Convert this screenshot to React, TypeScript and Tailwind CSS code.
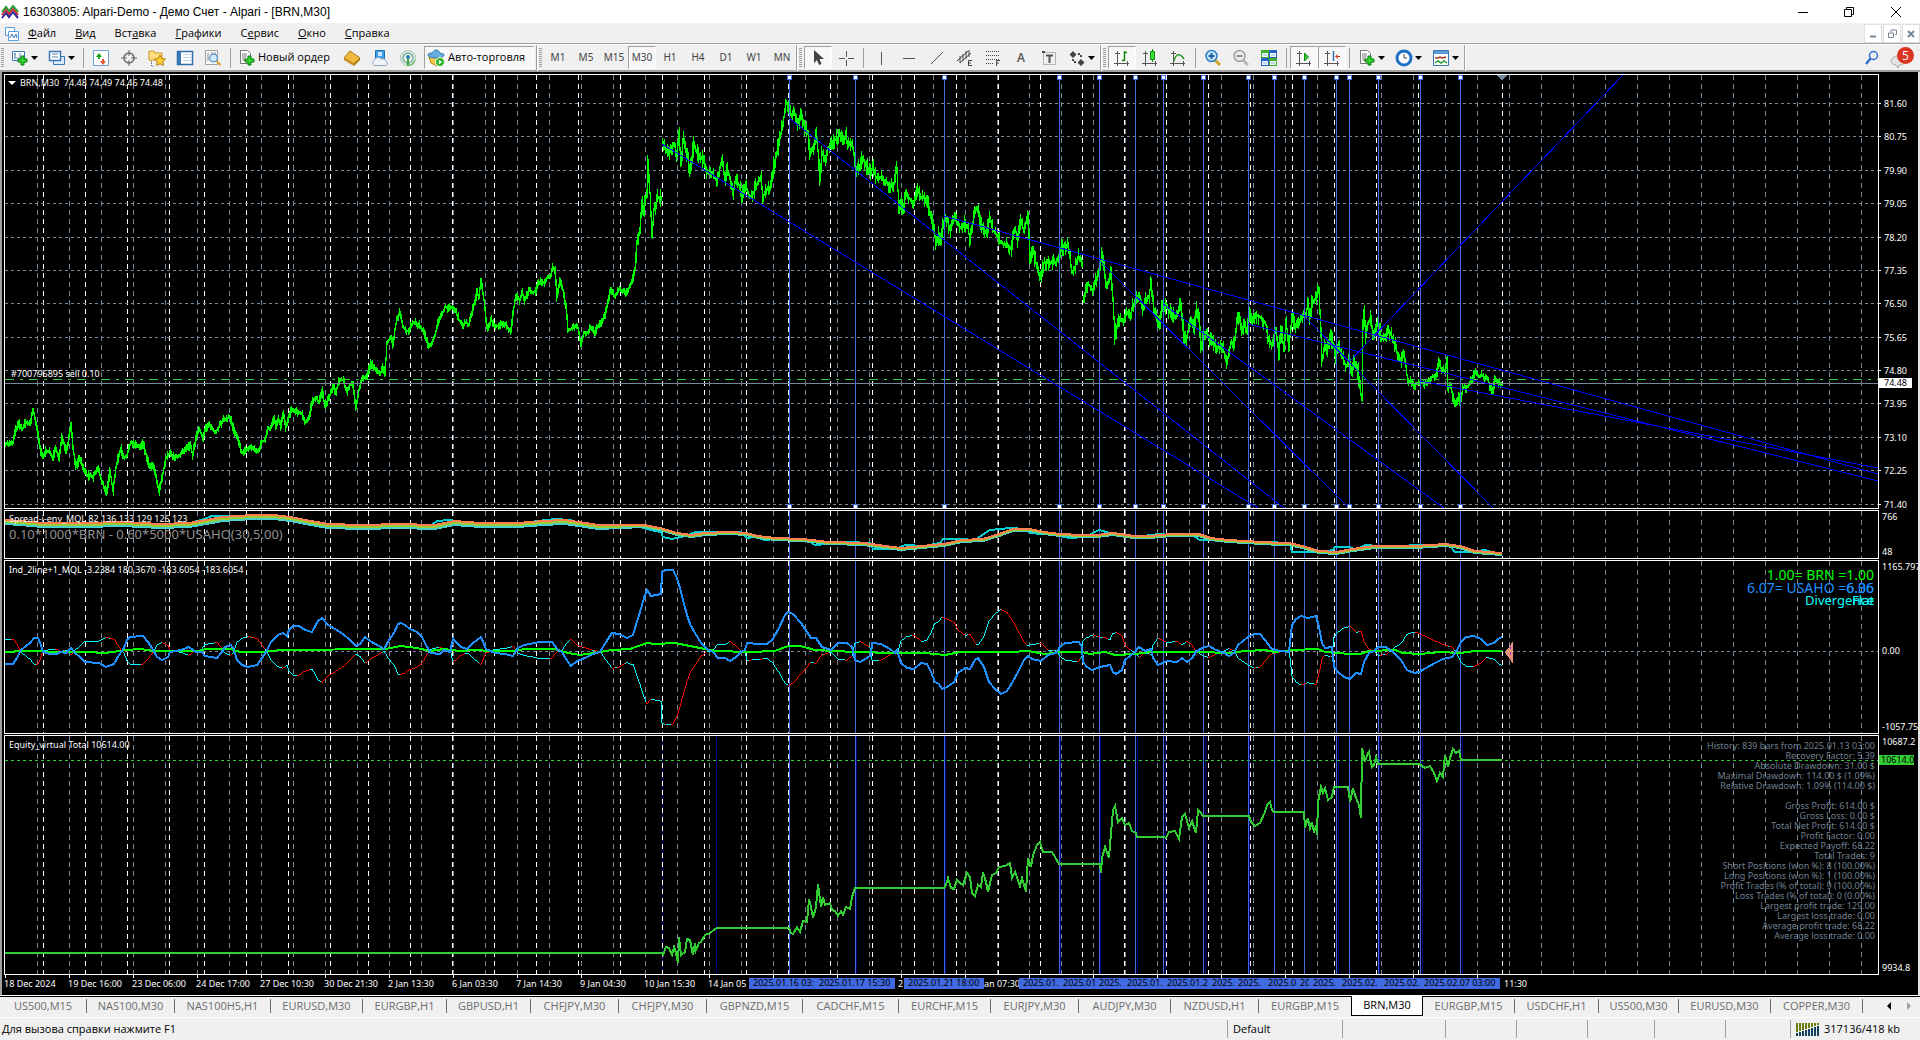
import React from 'react';

type Pt = [number, number];

const SMALL = "font-['Noto_Sans',sans-serif] text-[9px] leading-[10px]";

/* ---------- chart data ---------- */

const parse = (s: string): Pt[] => s.trim().split(/\s+/).map((p) => p.split(',').map(Number) as Pt);

const PRICE = [
  `5,443 8,444 12,443 14,432 18,423 21,430 25,422 29,425 32,410 34,418 37,435 40,453 42,458 45,450 48,452 52,457 55,448 58,460
  61,437 65,450 67,443 70,423 72,447 75,467 79,458 82,468 86,475 92,477 97,468 99,475 103,487 106,493 109,470 112,491 115,467
  120,448 123,458 126,455 130,442 135,445 139,447 142,443 146,458 149,468 152,465 155,477 158,492 162,473 165,458 169,453
  173,458 179,455 185,450 189,445 192,455 194,443 198,428 202,438 205,427 209,425 214,433 219,425 223,420 229,417 233,430
  237,440 241,453 244,450 250,447 257,452 261,442 264,440 267,427 269,430 273,418 275,427 278,420 280,427 282,413 285,427
  290,410 295,412 301,413 304,423 308,417 311,403 315,397 318,403 321,390 324,407 328,398 332,387 335,392 338,380 342,380
  346,392 349,385 352,385 355,408 358,390 361,378 365,377 367,373 370,362 373,368 379,374 382,368 384,373 386,343 390,337
  392,345 394,330 396,318 399,312 402,327 405,330 408,332 412,322 418,325 423,332 427,345 430,345 434,335 437,322 441,315
  444,307 447,308 451,307 455,312 458,320 462,325 465,322 468,325 471,313 474,300 476,292 478,298 480,280 483,300 485,320
  487,330 490,320 495,327 500,324 505,325 510,332 512,313 515,295 519,300 521,293 524,300 528,290 531,292 535,292 537,282
  543,282 547,277 549,278 552,267 554,270 556,297 559,282 562,290 565,307 567,330 572,328 575,325 577,328 580,343 583,333
  587,333 590,327 593,333 598,325 603,317 606,307 609,293 611,290 614,297 618,289 624,293 628,288 631,282 634,270 636,243
  639,230 641,203 643,210 646,190 647,160 649,193 651,237 653,210 657,197 661,198`,
  `662,142 664,148 668,155 671,147 673,143 676,155 678,133 680,165 682,140 684,145 687,158 689,172 693,143 696,153 700,157
  703,163 707,173 711,172 716,182 721,158 724,180 726,167 730,182 732,193 735,178 738,185 741,195 745,187 749,198 753,192
  757,182 760,177 762,198 765,190 769,188 771,177 774,160 776,153 778,142 780,133 783,117 785,102 788,108 791,117 793,112
  797,123 800,115 803,125 807,133 809,153 812,150 815,133 817,150 819,178 821,153 824,160 827,148 830,145 834,140 839,135
  842,142 845,135 847,147 850,142 853,153 855,173 858,168 862,157 865,165 869,172 872,167 875,177 880,178 885,182 889,187
  893,183 896,168 898,213 900,200 902,210 905,193 908,198 913,203 916,188 920,198 923,198 927,205 930,215 933,228 935,245
  938,235 940,243 942,223 946,218 949,230 952,217 956,222 959,228 963,223 967,228 969,240 972,222 973,212 976,208 980,222
  983,233 986,233 989,217 992,230 996,235 1000,243 1005,245 1010,249 1014,228 1017,240 1020,220 1023,232 1027,213 1029,263
  1032,247 1034,260 1038,273 1040,276 1043,263 1050,263 1055,262 1058,255 1061,247 1065,247 1067,243 1071,273 1073,270
  1077,257 1082,264`,
  `1083,300 1087,283 1092,291 1096,277 1099,268 1101,252 1104,277 1106,288 1110,270 1112,300 1114,337 1118,317 1122,322
  1126,312 1129,317 1132,305 1135,303 1138,293 1142,307 1145,300 1148,297 1150,283 1153,310 1156,320 1159,325 1161,303
  1166,307 1171,315 1176,316 1180,303 1183,335 1186,337 1190,318 1193,330 1196,310 1198,318 1200,348 1203,333 1207,335
  1211,343 1216,348 1221,345 1226,363 1230,342 1233,348 1236,323 1238,313 1241,333 1243,322 1246,333 1248,310 1251,323
  1254,315 1260,317 1265,325 1267,337 1271,345 1275,328 1278,357 1280,327 1283,350 1285,320 1288,347 1291,315 1294,328
  1298,323 1302,317 1305,315 1307,303 1309,317 1311,303 1314,300 1316,297 1318,288 1320,333 1321,360 1324,347 1326,352
  1329,335 1332,343 1335,355 1338,348 1342,358 1345,367 1348,360 1351,375 1353,363 1357,370 1359,388 1361,400 1362,325
  1363,310 1365,337 1367,323 1370,317 1372,338 1375,332 1377,320 1380,337 1384,338 1387,328 1390,335 1394,345 1397,357
  1400,362 1402,352 1405,367 1407,383 1411,380 1413,385 1420,382 1425,383 1430,378 1435,375 1438,363 1441,370 1444,372
  1446,360 1447,390 1449,383 1452,397 1454,403 1457,398 1460,401 1462,387 1467,387 1471,378 1475,372 1478,377 1481,375
  1484,378 1487,380 1491,393 1494,380 1498,383 1502,385`,
].map(parse);

const OSC = parse(`5,664 13,664 17,658 21,650 26,646 30,643 34,638 38,638 41,645 43,652 50,654 57,654 60,652 66,653 71,648 75,653
  80,657 85,662 99,663 106,667 114,664 119,655 124,648 127,640 130,637 143,636 148,642 152,648 157,657 162,660 168,657 170,652
  181,650 189,647 196,652 202,652 205,656 217,658 221,653 225,647 231,645 234,650 237,660 242,665 248,667 257,665 262,658
  266,652 271,642 278,635 283,633 287,636 289,630 293,626 299,626 305,630 312,632 318,621 322,618 328,625 335,629 343,634
  350,640 356,646 360,644 365,637 370,641 379,646 384,649 389,640 394,633 398,624 401,623 405,625 410,629 417,632 422,637
  427,647 431,653 440,654 444,650 450,652 453,639 461,647 467,649 473,643 481,637 486,649 495,653 505,654 513,656 518,648
  524,645 535,643 539,642 552,642 558,650 562,652 566,659 571,666 577,661 585,658 593,654 600,652 606,642 612,633 619,634
  627,638 633,635 636,625 640,612 644,598 647,590 651,596 661,594 662,572 665,570 673,570 677,578 680,588 683,600 687,615
  690,624 695,633 701,643 707,649 713,652 718,658 725,658 730,661 736,657 741,652 745,650 747,643 758,644 767,644 773,639
  779,628 785,615 788,612 793,614 801,623 807,632 811,638 816,638 822,647 831,650 838,643 847,643 852,647 855,660 860,662
  867,658 871,655 872,643 881,644 890,649 895,653 897,650 901,663 907,668 914,669 921,663 927,664 931,672 935,682 939,684
  942,689 947,687 954,682 958,673 965,668 970,669 975,660 978,658 984,667 989,682 995,689 1001,694 1007,691 1012,683
  1018,672 1024,660 1028,656 1032,659 1041,661 1048,655 1056,653 1060,647 1065,643 1079,642 1082,647 1083,662 1087,667
  1092,670 1100,667 1105,666 1110,665 1113,672 1116,674 1122,670 1125,660 1130,656 1135,652 1139,647 1145,651 1151,649
  1153,658 1158,665 1167,661 1177,662 1182,658 1187,662 1192,658 1196,652 1202,648 1209,646 1216,650 1224,653 1229,656
  1234,653 1238,645 1243,641 1248,637 1254,634 1260,634 1265,640 1271,648 1274,650 1289,652 1292,625 1296,619 1301,616
  1308,618 1316,616 1319,627 1322,643 1325,648 1332,647 1334,667 1338,672 1344,677 1350,679 1356,673 1361,674 1364,662
  1369,653 1374,651 1378,647 1386,647 1393,652 1401,660 1407,670 1414,673 1419,672 1426,668 1435,663 1443,659 1452,657
  1457,650 1461,642 1466,637 1474,636 1481,639 1487,645 1494,643 1498,639 1502,637`);

const BASE = parse(`5,652 13,652 16,651 38,651 48,652 85,652 106,653 119,651 127,650 140,649 155,651 198,651 206,649 230,649 240,652
  262,652 270,651 285,650 385,649 401,646 417,648 430,651 444,649 460,651 475,650 490,651 512,651 525,649 555,649 568,653
  580,655 600,652 612,650 630,649 647,643 655,644 675,643 700,648 715,651 750,652 775,651 788,646 800,646 815,650 855,652
  895,653 925,653 945,655 960,652 975,652 1010,652 1028,651 1045,654 1060,652 1082,652 1090,654 1105,652 1115,655
  1135,654 1150,652 1200,652 1230,653 1245,651 1265,650 1275,652 1293,650 1318,649 1325,652 1350,654 1360,654 1369,651
  1395,650 1403,653 1420,654 1440,652 1460,653 1475,651 1502,651`);

const SPREAD = parse(`5,520 21,521 42,523 84,523 122,522 160,524 189,523 206,520 223,517 253,515 274,515 290,517 311,521 328,524
  362,525 400,524 434,525 455,521 480,523 518,523 543,521 564,520 579,522 598,525 644,525 660,528 677,533 691,535 705,533
  730,532 746,533 758,536 775,538 803,539 828,542 864,543 885,546 901,548 922,546 944,544 962,540 983,539 999,534 1013,529
  1030,529 1044,532 1060,534 1081,535 1097,535 1113,533 1134,536 1150,536 1171,534 1199,534 1211,538 1228,540 1280,543
  1289,543 1302,546 1319,551 1336,552 1353,549 1374,546 1416,546 1445,544 1460,546 1475,551 1502,553`);

const SPREAD_RAW = parse(`5,523 30,522 60,524 100,524 150,525 190,523 204,519 212,516 225,516 245,516 270,518 290,521 320,526 340,528
  360,528 400,527 430,526 437,521 450,520 470,524 500,526 530,522 555,519 570,520 590,526 640,527 655,531 661,532 663,537
  672,539 685,536 695,532 705,532 740,532 747,538 755,537 765,540 785,538 810,542 815,545 850,542 870,543 873,549 895,549
  905,545 925,546 940,543 943,539 960,539 975,540 985,533 990,530 1010,528 1025,529 1030,533 1055,535 1070,538 1085,537
  1099,530 1110,533 1120,536 1135,538 1150,535 1160,534 1180,536 1190,534 1200,540 1240,541 1265,542 1290,543 1292,552
  1320,552 1333,550 1335,547 1350,547 1355,550 1365,545 1378,546 1440,545 1450,546 1455,552 1470,552 1485,550 1495,553
  1502,555`);

const EQUITY = `5,953 662,953 663,955 666,947 669,948 672,955 674,947 676,953 678,963 679,937 681,955 685,952 687,939 690,940
  693,955 695,943 696,950 699,943 701,942 705,935 710,933 715,929 717,928 789,928 791,933 793,934 797,927 800,932 803,921
  807,922 809,899 811,907 813,918 816,907 818,884 821,907 823,897 825,905 830,903 832,910 835,911 838,916 841,911 843,915
  846,907 850,909 852,897 855,888 944,888 946,885 948,878 951,888 954,889 957,880 960,883 963,885 967,873 970,877 972,893
  975,896 978,885 981,887 983,872 986,882 988,892 992,875 996,873 999,867 1005,866 1010,863 1012,878 1015,872 1020,886
  1022,878 1026,892 1028,858 1031,867 1033,855 1037,845 1040,842 1043,852 1052,852 1055,857 1059,864 1100,864 1101,873
  1102,858 1105,847 1109,858 1111,833 1113,810 1115,806 1118,822 1122,818 1125,825 1129,823 1132,831 1136,833 1137,837
  1164,837 1166,838 1169,832 1175,831 1179,839 1182,817 1185,814 1189,828 1192,821 1196,833 1198,810 1200,812 1203,816
  1249,816 1251,822 1255,826 1260,823 1265,812 1267,805 1270,802 1272,810 1274,812 1304,812 1305,828 1308,818 1310,828
  1312,822 1314,833 1316,825 1317,835 1318,802 1321,787 1323,793 1325,788 1328,800 1332,797 1334,787 1348,787 1350,802
  1353,788 1356,798 1359,805 1361,818 1362,748 1365,762 1367,755 1369,752 1372,767 1374,765 1376,757 1378,764 1419,764
  1422,766 1425,768 1430,766 1434,773 1437,781 1440,773 1443,777 1445,755 1448,767 1450,758 1453,749 1456,753 1459,751
  1461,760 1502,760`;

const TREND_LINES = [
  [662, 144, 1258, 508], [789, 118, 1284, 508], [944, 216, 1878, 474], [1099, 260, 1349, 508], [1163, 304, 1444, 508],
  [1248, 324, 1878, 481], [1304, 316, 1493, 508], [1349, 362, 1623, 75], [1420, 381, 1878, 468],
];

const GRID_X = Array.from({ length: 58 }, (_, i) => 37 + 32 * i);
const GRID_Y = [103, 136, 170, 203, 237, 270, 303, 337, 370, 403, 437, 470, 504];
const DAYS = [43, 85, 127, 169, 204, 246, 288, 330, ...Array.from({ length: 28 }, (_, i) => 368 + 42 * i)];
const MARKS = [789, 855, 944, 1059, 1099, 1135, 1163, 1203, 1248, 1274, 1304, 1336, 1349, 1378, 1420, 1460];
const TRADES = [662, 716, 856, 945, 1060, 1100, 1137, 1165, 1205, 1249, 1338, 1379, 1422, 1462];

/* ---------- helpers ---------- */

const sample = (pts: Pt[]): Pt[] => {
  const out: Pt[] = [];
  let k = 0;
  for (let x = pts[0][0]; x <= pts[pts.length - 1][0]; x++) {
    while (k < pts.length - 2 && x > pts[k + 1][0]) k++;
    const [x0, y0] = pts[k];
    const [x1, y1] = pts[k + 1];
    out.push([x, y0 + ((y1 - y0) * (x - x0)) / (x1 - x0)]);
  }
  return out;
};

const line = (pts: Pt[], dy = 0) => pts.map(([x, y]) => `${x},${Math.round(y + dy)}`).join(' ');

// the averages fan out on the calm first part of the history
const band = (n: number) => SPREAD.map(([x, y]) => `${x},${x < 640 ? y + 2 * n : y + n}`).join(' ');

const priceBars = () => {
  let seed = 7;
  const rnd = () => (seed = (seed * 16807) % 2147483647) / 2147483647;
  let d = '';
  PRICE.forEach((part) => {
    let prev = part[0][1];
    sample(part).forEach(([x, y]) => {
      const amp = x < 636 ? 4 : x < 1400 ? 8 : 5;
      const hi = Math.min(y, prev) - 1 - Math.pow(rnd(), 2) * amp;
      const lo = Math.max(y, prev) + 1 + Math.pow(rnd(), 2) * amp;
      d += `M${x + 0.5} ${Math.round(hi)}V${Math.round(lo)}`;
      prev = y;
    });
  });
  return d;
};

// mirror of the blue line; cyan while it moves away from zero, red on the way back
const mirrorPaths = () => {
  const a = sample(OSC);
  const b = sample(BASE);
  const v = a.map(([x, y], i): Pt => [x, Math.round(651 + (b[i][1] - 651) - (y - 651))]);
  let cyan = '';
  let red = '';
  for (let i = 1; i < v.length; i++) {
    const look = Math.min(v.length - 1, i + 2);
    const seg = `M${v[i - 1][0]} ${v[i - 1][1]}L${v[i][0]} ${v[i][1]}`;
    if (Math.abs(v[look][1] - 651) >= Math.abs(v[i - 1][1] - 651)) cyan += seg;
    else red += seg;
  }
  return { cyan, red };
};

const BARS = priceBars();
const MIRROR = mirrorPaths();

/* ---------- chart ---------- */

const Grid = ({ top, bottom }: { top: number; bottom: number }) => (
  <g strokeWidth="1">
    {GRID_X.map((x) => (
      <path key={x} d={`M${x + 0.5} ${top}V${bottom}`} stroke="#778899" strokeDasharray="5 4" />
    ))}
    {DAYS.map((x) => (
      <path key={x} d={`M${x + 0.5} ${top}V${bottom}`} stroke="#fff" strokeDasharray="5 4" />
    ))}
  </g>
);

const Marks = ({ top, bottom }: { top: number; bottom: number }) => (
  <path d={MARKS.map((x) => `M${x + 0.5} ${top}V${bottom}`).join('')} stroke="#4169e1" />
);

interface PanelProps {
  top: number;
  height: number;
  axis: React.ReactNode;
  overlay?: React.ReactNode;
  children: React.ReactNode;
}

const Panel: React.FC<PanelProps> = ({ top, height, axis, overlay, children }) => (
  <div className="flex min-h-0">
    <div className="relative min-w-0 flex-1 overflow-hidden border border-white">
      <svg
        className="block h-full w-full"
        viewBox={`5 ${top + 1} 1873 ${height - 2}`}
        preserveAspectRatio="none"
        shapeRendering="crispEdges"
        fill="none"
      >
        {children}
      </svg>
      {overlay}
    </div>
    <div className={`relative w-[39px] shrink-0 whitespace-nowrap text-white ${SMALL}`}>{axis}</div>
  </div>
);

const PRICES = ['81.60', '80.75', '79.90', '79.05', '78.20', '77.35', '76.50', '75.65', '74.80', '73.95', '73.10', '72.25', '71.40'];

const PriceAxis = () => (
  <>
    {PRICES.map((p, i) => (
      <div
        key={p}
        className="absolute left-0 flex -translate-y-1/2 items-center gap-[3px]"
        style={{ top: `${((GRID_Y[i] - 73.5) / 435) * 100}%` }}
      >
        <i className="h-px w-[2px] bg-white" />
        {p}
      </div>
    ))}
    <div
      className="absolute left-0 -translate-y-1/2 bg-white px-[5px] text-black"
      style={{ top: `${((383 - 73.5) / 435) * 100}%` }}
    >
      74.48
    </div>
  </>
);

const STATS = [
  'History: 839 bars from 2025.01.13 03:00',
  'Recovery Factor: 5.39',
  'Absolute Drawdown: 31.00 $',
  'Maximal Drawdown: 114.00 $ (1.09%)',
  'Relative Drawdown: 1.09% (114.00 $)',
  '',
  'Gross Profit: 614.00 $',
  'Gross Loss: 0.00 $',
  'Total Net Profit: 614.00 $',
  'Profit Factor: 0.00',
  'Expected Payoff: 68.22',
  'Total Trades: 9',
  'Short Positions (won %): 8 (100.00%)',
  'Long Positions (won %): 1 (100.00%)',
  'Profit Trades (% of total): 9 (100.00%)',
  'Loss Trades (% of total): 0 (0.00%)',
  'Largest profit trade: 129.00',
  'Largest loss trade: 0.00',
  'Average profit trade: 68.22',
  'Average loss trade: 0.00',
];

const TIMES: [number, string][] = [
  [4, '18 Dec 2024'], [68, '19 Dec 16:00'], [132, '23 Dec 06:00'], [196, '24 Dec 17:00'], [260, '27 Dec 10:30'],
  [324, '30 Dec 21:30'], [388, '2 Jan 13:30'], [452, '6 Jan 03:30'], [516, '7 Jan 14:30'], [580, '9 Jan 04:30'],
  [644, '10 Jan 15:30'], [708, '14 Jan 05'], [898, '2'], [984, 'an 07:30'], [1504, '11:30'],
];

const MARK_LABELS = [
  '2025.01.16 03:', '2025.01.17 15:30', '2025.01.21 18:00', '2025.01.', '2025.01', '2025.', '2025.01.', '2025.01.2',
  '2025.', '2025.', '2025.0', '20', '2025.', '2025.02.', '2025.02.', '2025.02.07 03:00',
];

const TimeAxis = () => (
  <div className={`relative h-[20px] overflow-hidden whitespace-nowrap text-white ${SMALL}`}>
    {Array.from({ length: 24 }, (_, i) => (
      <i key={i} className="absolute top-0 h-[3px] w-px bg-white" style={{ left: 3 + 64 * i }} />
    ))}
    {TIMES.map(([x, t]) => (
      <span key={x} className="absolute top-[4px]" style={{ left: x - 2 }}>
        {t}
      </span>
    ))}
    {MARKS.map((x, i) => (
      <span key={x} className="absolute top-[3px] h-[11px] w-[80px] bg-[#4169e1] pl-[4px] text-black" style={{ left: x - 42 }}>
        {MARK_LABELS[i]}
      </span>
    ))}
  </div>
);

const ChartWindow = () => (
  <main className="flex min-h-0 flex-1 flex-col border-r-2 border-l-2 border-r-[#e3e3e3] border-l-[#a0a0a0] bg-black pt-[2px]">
    <div className="grid min-h-0 flex-1 grid-rows-[435fr_49fr_174fr_240fr] gap-px pl-[2px]">
      <Panel
        top={74}
        height={435}
        axis={<PriceAxis />}
        overlay={
          <div className={`absolute inset-x-0 top-[3px] h-0 whitespace-pre text-white ${SMALL}`}>
            <div className="flex items-center gap-[4px] pl-[3px]">
              <svg width="8" height="4" viewBox="0 0 8 4">
                <path d="M0 0h8L4 4z" fill="#fff" />
              </svg>
              {'BRN,M30  74.48 74.49 74.46 74.48'}
            </div>
            <div className="absolute top-[291px] left-[6px]">#700796895 sell 0.10</div>
          </div>
        }
      >
        <Grid top={75} bottom={508} />
        {GRID_Y.map((y) => (
          <path key={y} d={`M5 ${y + 0.5}H1878`} stroke="#778899" strokeDasharray="3 3" />
        ))}
        <path d={BARS} stroke="#0f0" />
        <path d="M5 379.5H1878" stroke="#32cd32" strokeDasharray="9 6 3 6" />
        <path d="M5 383.5H1878" stroke="#778899" />
        <Marks top={75} bottom={508} />
        {TREND_LINES.map(([x1, y1, x2, y2]) => (
          <line key={x1} x1={x1} y1={y1} x2={x2} y2={y2} stroke="#00f" />
        ))}
        {MARKS.map((x) => (
          <path key={x} d={`M${x - 1.5} 75.5h4v4h-4zM${x - 1.5} 504.5h4v4h-4z`} fill="#fff" stroke="#4169e1" />
        ))}
        <path d="M1497 75h10l-5 6z" fill="#778899" />
      </Panel>

      <Panel
        top={510}
        height={49}
        axis={
          <div className="flex h-full flex-col justify-between pt-[2px] pb-[2px] pl-[3px]">
            <span>766</span>
            <span>48</span>
          </div>
        }
        overlay={
          <div className="absolute top-[3px] left-[4px] whitespace-nowrap">
            <div className={`text-white ${SMALL}`}>Spread-i-env_MQL 82 136 133 129 126 123</div>
            <div className="font-['Noto_Sans',sans-serif] text-[13px] leading-[20px] text-[#909090]">
              0.10*1000*BRN - 0.60*5000*USAHO(30,5.00)
            </div>
          </div>
        }
      >
        <Grid top={511} bottom={558} />
        <Marks top={511} bottom={558} />
        <polyline points={line(SPREAD_RAW)} stroke="#00ced1" strokeWidth="2" />
        <polyline points={band(2)} stroke="#48d1cc" strokeWidth="2" />
        <polyline points={band(1)} stroke="#9acd32" strokeWidth="2" />
        <polyline points={band(0)} stroke="#ff7f50" strokeWidth="2" />
      </Panel>

      <Panel
        top={560}
        height={174}
        axis={
          <div className="flex h-full flex-col justify-between pt-[2px] pb-[2px] pl-[3px]">
            <span>1165.797</span>
            <span className="absolute top-[86px]">0.00</span>
            <span>-1057.75</span>
          </div>
        }
        overlay={
          <>
            <div className={`absolute top-[4px] left-[4px] whitespace-nowrap text-white ${SMALL}`}>
              Ind_2line+1_MQL -3.2384 180.3670 -183.6054 -183.6054
            </div>
            <div className="absolute top-[7px] right-[4px] text-right font-['Noto_Sans',sans-serif] text-[14px] leading-[13px] whitespace-nowrap">
              <div className="text-[#0f0]">1.00= BRN =1.00</div>
              <div className="relative text-[#1e90ff]">
                6.07= USAHO =6.06
                <span className="absolute top-0 right-0">6.36</span>
              </div>
              <div className="relative text-[13px] leading-[12px] text-[#0ff]">
                Divergence
                <span className="absolute top-0 right-0">Flat</span>
              </div>
            </div>
          </>
        }
      >
        <Grid top={561} bottom={733} />
        <path d="M5 651.5H1878" stroke="#778899" strokeDasharray="3 3" />
        <Marks top={561} bottom={733} />
        <path d={MIRROR.cyan} stroke="#0ff" />
        <path d={MIRROR.red} stroke="#f00" />
        <polyline points={line(BASE)} stroke="#0f0" strokeWidth="2" />
        <polyline points={line(OSC)} stroke="#1e90ff" strokeWidth="2" />
        <path d="M1512.5 642v21L1505 652.5z" fill="#e9967a" />
        <path d="M1510.5 646v13" stroke="#9932cc" strokeDasharray="3 3" />
      </Panel>

      <Panel
        top={735}
        height={240}
        axis={
          <div className="flex h-full flex-col justify-between pt-[2px] pb-[2px] pl-[3px]">
            <span>10687.2</span>
            <span className="absolute top-[20px] left-0 bg-[#32cd32] pl-[2px] text-black">10614.0</span>
            <span>9934.8</span>
          </div>
        }
        overlay={
          <>
            <div className={`absolute top-[4px] left-[4px] text-white ${SMALL}`}>Equity_virtual Total 10614.00</div>
            <div className={`absolute top-[5px] right-[3px] text-right whitespace-nowrap text-[#708090] ${SMALL}`}>
              {STATS.map((s, i) => (
                <div key={i} className="h-[10px]">
                  {s}
                </div>
              ))}
            </div>
          </>
        }
      >
        <path d={TRADES.map((x) => `M${x + 0.5} 736V974`).join('')} stroke="#000080" />
        <Grid top={736} bottom={974} />
        <path d="M5 760.5H1878" stroke="#32cd32" strokeDasharray="3 3" />
        <Marks top={736} bottom={974} />
        <polyline points={EQUITY} stroke="#32cd32" strokeWidth="2" />
      </Panel>
    </div>
    <TimeAxis />
  </main>
);

/* ---------- toolbar ---------- */

const Svg = ({ children, w = 18 }: { children: React.ReactNode; w?: number }) => (
  <svg width={w} height="18" viewBox={`0 0 ${w} 18`} fill="none" className="shrink-0">
    {children}
  </svg>
);

const Plus = () => <path d="M10 7h3v3h3v3h-3v3h-3v-3H7v-3h3z" fill="#2fd32f" stroke="#0a7d0a" />;

const icons = {
  newChart: (
    <Svg>
      <path d="M1.5 2.5h12v9h-12z" fill="#fff" stroke="#3a78b5" />
      <path d="M4 4v5M3 5h2M3 9h8M9 4v4" stroke="#5b84ad" />
      <Plus />
    </Svg>
  ),
  profiles: (
    <Svg>
      <path d="M5.5 7.5h11v8h-11z" fill="#dcebfa" stroke="#3a78b5" />
      <path d="M1.5 2.5h11v9h-11z" fill="#fff" stroke="#3a78b5" strokeWidth="1.5" />
      <path d="M4 5h6M4 8h6" stroke="#5b84ad" />
    </Svg>
  ),
  market: (
    <Svg>
      <path d="M1.5 1.5h15v15h-15z" fill="#fff" stroke="#6aa3d8" />
      <path d="M4 8l3-4 3 4H8v2H6V8z" fill="#1ba01b" />
      <path d="M8 12l3 4 3-4h-2v-2h-2v2z" fill="#e2582c" />
    </Svg>
  ),
  data: (
    <Svg>
      <circle cx="9" cy="9" r="5" stroke="#666" strokeWidth="1.5" />
      <path d="M9 1v6M9 11v6M1 9h6M11 9h6" stroke="#666" />
    </Svg>
  ),
  navigator: (
    <Svg>
      <path d="M1 2h5l1 2h7v7H1z" fill="#ffdf80" stroke="#c9992a" />
      <path d="M3.5 12v5h3" stroke="#555" strokeDasharray="1 1" />
      <path d="M12 6l1.700 3.500 3.800.5-2.700 2.600.6 3.900-3.400-1.800-3.400 1.800.6-3.900L6.500 10l3.800-.5z" fill="#ffd02e" stroke="#b17d0c" />
    </Svg>
  ),
  terminal: (
    <Svg>
      <path d="M1.5 2.5h15v13h-15z" fill="#fff" stroke="#2f6fae" strokeWidth="1.5" />
      <path d="M2 3h3v12H2z" fill="#3a78b5" />
      <path d="M7 5.5h8M7 8.500h8M7 11.500h8" stroke="#c5d5e5" />
    </Svg>
  ),
  tester: (
    <Svg>
      <path d="M1.5 1.5h12v14h-12z" fill="#f8f8f8" stroke="#a0a0a0" />
      <path d="M4 4v8M8 3v7M11 3v5" stroke="#888" />
      <circle cx="9.500" cy="9" r="4" fill="#cfe6fb" stroke="#3a86c8" />
      <path d="M12.500 12l4 4" stroke="#d8a320" strokeWidth="2" />
    </Svg>
  ),
  order: (
    <Svg>
      <path d="M2.500 1.500h7l3 3v10h-10z" fill="#fff" stroke="#777" />
      <path d="M4 5h5M4 7h5M4 9h4M4 11h3" stroke="#777" />
      <Plus />
    </Svg>
  ),
  gold: (
    <Svg>
      <path d="M7 2l10 7-6 6L1 9z" fill="#f0bb3c" stroke="#a9770f" />
      <path d="M1 9l10 6v2L1 11z" fill="#c98d1b" />
      <path d="M11 15l6-6v2l-6 6z" fill="#a9770f" />
    </Svg>
  ),
  cloud: (
    <Svg>
      <path d="M4.500 1.500h9v8h-9z" fill="#3fa0ee" stroke="#1d6fb8" />
      <path d="M7 3h4v4H7z" fill="#cfe8ff" />
      <path d="M3.500 16.500a3 3 0 010-5.500 4 4 0 017-1 3 3 0 014 2 2.300 2.300 0 010 4.500z" fill="#eef4fa" stroke="#8aa5c0" />
    </Svg>
  ),
  signal: (
    <Svg>
      <circle cx="9" cy="9" r="7.500" fill="#e4efe9" stroke="#a7c3b4" />
      <circle cx="9" cy="9" r="5" stroke="#7bb0a0" strokeWidth="1.5" />
      <circle cx="9" cy="8" r="2" fill="#2c7fc4" />
      <path d="M9 9v8" stroke="#3da53d" strokeWidth="2" />
      <path d="M9 16.500a8 8 0 007-5" stroke="#6dbb6d" strokeWidth="1.5" />
    </Svg>
  ),
  expert: (
    <Svg>
      <path d="M2 8l2 6 6 3 5-4V8z" fill="#f2c94a" stroke="#b88a17" />
      <path d="M1 6c0-2 3-2 4-2s1-3 4-3 3 2 4 3 4 0 4 2-4 3-8 3-8-1-8-3z" fill="#64aee0" stroke="#2f77ad" />
      <circle cx="13" cy="13" r="4.500" fill="#27b527" stroke="#fff" />
      <path d="M11.800 10.800v4.400l3.400-2.200z" fill="#fff" />
    </Svg>
  ),
  cursor: (
    <Svg>
      <path d="M5 1v13l3-3 2 5 2.500-1-2-5H15z" fill="#444" />
    </Svg>
  ),
  cross: (
    <Svg>
      <path d="M9.500 2v6M9.500 11v6M2 9.500h6M11 9.500h6" stroke="#555" />
    </Svg>
  ),
  vline: (
    <Svg>
      <path d="M9.500 3v13" stroke="#555" />
    </Svg>
  ),
  hline: (
    <Svg>
      <path d="M3 9.500h12" stroke="#555" />
    </Svg>
  ),
  trend: (
    <Svg>
      <path d="M3 15L15 3" stroke="#555" />
    </Svg>
  ),
  channel: (
    <Svg>
      <path d="M1 12L12 2M4 14L15 4M4 7v7M7 5v7M10 2v8M13 1v7" stroke="#444" />
      <path d="M16 11.500h-3.500v5H16M12.500 14H15" stroke="#444" />
    </Svg>
  ),
  fibo: (
    <Svg>
      <path d="M2 2.500h14M2 6.500h14M2 10.500h14M2 14.500h8" stroke="#444" strokeDasharray="1 1" />
      <path d="M16 11.500h-3.500V17M12.500 14H15" stroke="#444" />
    </Svg>
  ),
  label: (
    <Svg>
      <path d="M3.500 3.500h12v12h-12z" stroke="#777" strokeDasharray="1 1" />
      <path d="M6 6.500h7M9.500 6v8" stroke="#555" strokeWidth="2" />
      <path d="M2 2h3v2H2z" fill="#444" />
    </Svg>
  ),
  arrows: (
    <Svg>
      <path d="M5 2l3.500 3.500L5 9 1.500 5.500zM13 10l3.500 3.500L13 17l-3.500-3.500z" fill="#444" />
      <path d="M10 5h2M12 7h2M4 11h2M6 13h2" stroke="#444" strokeWidth="2" />
    </Svg>
  ),
  bars: (
    <Svg>
      <path d="M4.500 2v15M2 4.500h5M1 14.500h15M14.500 12v5" stroke="#555" />
      <path d="M11.500 2v10M11.500 3.500H14M9 11.500h2.500" stroke="#128a12" strokeWidth="1.5" />
    </Svg>
  ),
  candles: (
    <Svg>
      <path d="M4.500 2v15M2 4.500h5M1 14.500h15M14.500 12v5" stroke="#555" />
      <path d="M11.500 0v13" stroke="#128a12" />
      <path d="M9.500 2.500h4v8h-4z" fill="#3adf3a" stroke="#128a12" />
    </Svg>
  ),
  linear: (
    <Svg>
      <path d="M4.500 2v15M2 4.500h5M1 14.500h15M14.500 12v5" stroke="#555" />
      <path d="M5 12c2-8 6-8 10-2" stroke="#2c9a2c" strokeWidth="1.5" />
    </Svg>
  ),
  zoomIn: (
    <Svg>
      <path d="M11 11l5 5" stroke="#d6a422" strokeWidth="3" />
      <circle cx="7.500" cy="7" r="5.500" fill="#c9e6fb" stroke="#2e7cc0" strokeWidth="1.5" />
      <path d="M7.500 4v6M4.500 7h6" stroke="#1b62a6" strokeWidth="2" />
    </Svg>
  ),
  zoomOut: (
    <Svg>
      <path d="M11 11l5 5" stroke="#b5b5b5" strokeWidth="3" />
      <circle cx="7.500" cy="7" r="5.500" fill="#ececec" stroke="#a0a0a0" strokeWidth="1.5" />
      <path d="M4.500 7h6" stroke="#909090" strokeWidth="2" />
    </Svg>
  ),
  tiles: (
    <Svg>
      <path d="M1 1h8v8H1zM9 9h8v8H9z" fill="#3fae2a" />
      <path d="M9 1h8v8H9zM1 9h8v8H1z" fill="#2b62c9" />
      <path d="M2 4h6v4H2zM10 4h6v4h-6zM2 12h6v4H2zM10 12h6v4h-6z" fill="#eef6ff" />
      <path d="M3 6h4M11 6h4M3 14h4M11 14h4" stroke="#9bbbd8" />
    </Svg>
  ),
  autoScroll: (
    <Svg>
      <path d="M4.500 2v15M2 4.500h5M1 14.500h15M14.500 12v5" stroke="#555" />
      <path d="M9.500 4v8l4-4z" fill="#3ecb3e" stroke="#128a12" />
    </Svg>
  ),
  shift: (
    <Svg>
      <path d="M4.500 2v15M2 4.500h5M1 14.500h15M14.500 12v5" stroke="#555" />
      <path d="M10.500 2v10" stroke="#2f6fae" strokeWidth="1.5" />
      <path d="M17 7.500h-4M15 5.500l-2.500 2 2.500 2" stroke="#c8401c" />
    </Svg>
  ),
  clock: (
    <Svg>
      <circle cx="9" cy="9" r="7" fill="#fff" stroke="#1b6fc4" strokeWidth="3" />
      <path d="M9 5v4h3" stroke="#444" />
    </Svg>
  ),
  template: (
    <Svg>
      <path d="M1.500 1.500h15v15h-15z" fill="#fff" stroke="#3a78b5" />
      <path d="M2 2h14v3H2z" fill="#5b9bd8" />
      <path d="M3 9h3l2-1 2 1 4-1" stroke="#a03a1c" strokeWidth="1.5" />
      <path d="M3 14l3-2 3 2 3-2 3 2" stroke="#2c9a2c" strokeWidth="1.5" />
    </Svg>
  ),
};

const Grip = () => (
  <i className="mr-[2px] ml-px h-[20px] w-[3px] shrink-0 bg-[repeating-linear-gradient(#a0a0a0_0_1px,transparent_1px_2px)]" />
);

const Sep = () => <i className="mx-[3px] h-[20px] w-px shrink-0 bg-[#a0a0a0]" />;

const Edge = () => <i className="h-[26px] w-[2px] shrink-0 border-r border-l border-r-white border-l-[#a0a0a0]" />;

interface ToolProps {
  label: string;
  active?: boolean;
  caret?: boolean;
  children?: React.ReactNode;
}

const Tool: React.FC<ToolProps> = ({ label, active, caret, children }) => (
  <button
    type="button"
    aria-label={label}
    className={`flex h-[23px] shrink-0 items-center ${caret ? 'w-[37px] gap-[2px] pl-[5px]' : 'w-[28px] justify-center'} ${
      active ? 'border border-t-[#a0a0a0] border-r-white border-b-white border-l-[#a0a0a0] bg-[#f8f8f8]' : ''
    }`}
  >
    {children}
    {caret && (
      <svg width="7" height="4" viewBox="0 0 7 4">
        <path d="M0 0h7L3.500 4z" fill="#000" />
      </svg>
    )}
  </button>
);

const FRAMES = ['M1', 'M5', 'M15', 'M30', 'H1', 'H4', 'D1', 'W1', 'MN'];

const Toolbar = () => (
  <div className="flex h-[27px] items-center border-b-2 border-[#a0a0a0] bg-[#f0f0f0]">
    <Grip />
    <Tool label="Новый график" caret>{icons.newChart}</Tool>
    <Tool label="Профили" caret>{icons.profiles}</Tool>
    <Sep />
    <Tool label="Обзор рынка">{icons.market}</Tool>
    <Tool label="Окно данных">{icons.data}</Tool>
    <Tool label="Навигатор">{icons.navigator}</Tool>
    <Tool label="Терминал">{icons.terminal}</Tool>
    <Tool label="Тестер">{icons.tester}</Tool>
    <Sep />
    <button type="button" className="flex h-[23px] w-[104px] shrink-0 items-center gap-[2px] pl-[4px] text-[11px] whitespace-nowrap">
      {icons.order}
      Новый ордер
    </button>
    <Tool label="MetaEditor">{icons.gold}</Tool>
    <Tool label="VPS">{icons.cloud}</Tool>
    <Tool label="Сигналы">{icons.signal}</Tool>
    <button
      type="button"
      className="mx-[2px] flex h-[23px] w-[110px] shrink-0 items-center gap-[3px] border border-t-[#a0a0a0] border-r-white border-b-white border-l-[#a0a0a0] bg-[#f8f8f8] pl-[2px] text-[11px] whitespace-nowrap"
    >
      {icons.expert}
      Авто-торговля
    </button>
    <Edge />
    <Grip />
    {FRAMES.map((f) => (
      <Tool key={f} label={f} active={f === 'M30'}>
        <span className="font-['Noto_Sans',sans-serif] text-[10px] text-[#444]">{f}</span>
      </Tool>
    ))}
    <Edge />
    <Grip />
    <Tool label="Курсор" active>{icons.cursor}</Tool>
    <Tool label="Перекрестие">{icons.cross}</Tool>
    <Sep />
    <Tool label="Вертикальная линия">{icons.vline}</Tool>
    <Tool label="Горизонтальная линия">{icons.hline}</Tool>
    <Tool label="Трендовая линия">{icons.trend}</Tool>
    <Tool label="Канал">{icons.channel}</Tool>
    <Tool label="Фибоначчи">{icons.fibo}</Tool>
    <Tool label="Текст">
      <span className="text-[12px] font-semibold text-[#555]">A</span>
    </Tool>
    <Tool label="Метка">{icons.label}</Tool>
    <Tool label="Стрелки" caret>{icons.arrows}</Tool>
    <Edge />
    <Grip />
    <Tool label="Бары" active>{icons.bars}</Tool>
    <Tool label="Свечи">{icons.candles}</Tool>
    <Tool label="Линия">{icons.linear}</Tool>
    <Sep />
    <Tool label="Увеличить">{icons.zoomIn}</Tool>
    <Tool label="Уменьшить">{icons.zoomOut}</Tool>
    <Tool label="Плитка">{icons.tiles}</Tool>
    <Sep />
    <Tool label="Автопрокрутка" active>{icons.autoScroll}</Tool>
    <Tool label="Сдвиг графика" active>{icons.shift}</Tool>
    <Sep />
    <Tool label="Индикаторы" caret>{icons.order}</Tool>
    <Tool label="Периоды" caret>{icons.clock}</Tool>
    <Tool label="Шаблоны" caret>{icons.template}</Tool>
    <Edge />
    <div className="ml-auto flex items-center gap-[10px] pr-[6px]">
      <button type="button" aria-label="Поиск">
        <svg width="16" height="16" viewBox="0 0 16 16" fill="none">
          <circle cx="9.500" cy="5.500" r="4" stroke="#2e6fd0" strokeWidth="1.5" />
          <path d="M6.500 8.500L2 14" stroke="#2e6fd0" strokeWidth="2.5" />
        </svg>
      </button>
      <button type="button" aria-label="Сообщения" className="relative h-[22px] w-[24px]">
        <svg width="16" height="14" viewBox="0 0 16 14" className="absolute bottom-0 left-0">
          <path d="M8 1c4 0 7 2 7 5s-3 4-6 4l-1 3-2-3C3 10 1 8 1 6s3-5 7-5z" fill="#e4e4e4" stroke="#aaa" />
        </svg>
        <span className="absolute top-0 right-0 h-[17px] w-[17px] rounded-full bg-[#dc3522] text-center text-[12px] leading-[17px] text-white">
          5
        </span>
      </button>
    </div>
  </div>
);

/* ---------- window frame ---------- */

const TitleBar = () => (
  <header className="flex h-[23px] items-center bg-white">
    <svg width="18" height="16" viewBox="0 0 18 16" fill="none" strokeWidth="2" className="ml-px">
      <path d="M1 8l4-5 3 4 4-5 5 6" stroke="#1fa03a" />
      <path d="M1 11l4-5 3 4 4-5 5 6" stroke="#d22f2f" />
      <path d="M1 14l4-5 3 4 4-5 5 6" stroke="#2b2b9c" />
    </svg>
    <h1 className="ml-[4px] font-['Liberation_Sans',sans-serif] text-[12px]">16303805: Alpari-Demo - Демо Счет - Alpari - [BRN,M30]</h1>
    <div className="ml-auto flex">
      <button type="button" aria-label="Свернуть" className="flex w-[46px] justify-center">
        <svg width="10" height="10" viewBox="0 0 10 10"><path d="M0 5.500h10" stroke="#000" /></svg>
      </button>
      <button type="button" aria-label="Восстановить" className="flex w-[46px] justify-center">
        <svg width="10" height="10" viewBox="0 0 10 10" fill="none"><path d="M.5 2.500h7v7h-7zM2.500 2V.5h7v7H8" stroke="#000" /></svg>
      </button>
      <button type="button" aria-label="Закрыть" className="flex w-[48px] justify-center">
        <svg width="10" height="10" viewBox="0 0 10 10"><path d="M0 0l10 10M10 0L0 10" stroke="#000" /></svg>
      </button>
    </div>
  </header>
);

const MENU: [string, string, string][] = [
  ['', 'Ф', 'айл'], ['', 'В', 'ид'], ['Вст', 'а', 'вка'], ['', 'Г', 'рафики'], ['С', 'е', 'рвис'], ['', 'О', 'кно'], ['', 'С', 'правка'],
];

const MenuBar = () => (
  <nav className="flex h-[22px] items-center border-b border-white bg-[#f0f0f0] shadow-[inset_0_-1px_0_#a0a0a0]">
    <svg width="14" height="14" viewBox="0 0 14 14" fill="none" className="mr-[9px] ml-[5px]">
      <path d="M.5.5h9v8h-9z" fill="#fff" stroke="#5aa0e0" />
      <path d="M3.500 4.500h10v9h-10z" fill="#fff" stroke="#5aa0e0" />
      <path d="M5 11l2-4 2 4 2-4 1 4" stroke="#3a78b5" />
    </svg>
    <div className="flex gap-[19px]">
      {MENU.map(([a, u, b]) => (
        <button key={u + b} type="button" className="text-[11px]">
          {a}
          <u>{u}</u>
          {b}
        </button>
      ))}
    </div>
    <div className="ml-auto flex h-[19px] gap-px text-[#778899]">
      <button type="button" aria-label="Свернуть окно" className="flex w-[18px] items-center justify-center border border-[#e0e0e0] bg-white">
        <svg width="8" height="8" viewBox="0 0 8 8"><path d="M1 6.500h6" stroke="currentColor" strokeWidth="2" /></svg>
      </button>
      <button type="button" aria-label="Восстановить окно" className="flex w-[18px] items-center justify-center border border-[#e0e0e0] bg-white">
        <svg width="9" height="9" viewBox="0 0 9 9" fill="none"><path d="M.5 4h5v4.500h-5zM3 3V1h5.500v4.500H7" stroke="currentColor" /></svg>
      </button>
      <button type="button" aria-label="Закрыть окно" className="flex w-[18px] items-center justify-center border border-[#e0e0e0] bg-white">
        <svg width="8" height="8" viewBox="0 0 8 8"><path d="M1 1l6 6M7 1L1 7" stroke="currentColor" strokeWidth="2" /></svg>
      </button>
    </div>
  </nav>
);

const TABS: [string, string][] = [
  ['US500,M15', 'w-[87px]'], ['NAS100,M30', 'w-[88px]'], ['NAS100H5,H1', 'w-[96px]'], ['EURUSD,M30', 'w-[92px]'],
  ['EURGBP,H1', 'w-[84px]'], ['GBPUSD,H1', 'w-[84px]'], ['CHFJPY,M30', 'w-[88px]'], ['CHFJPY,M30', 'w-[88px]'],
  ['GBPNZD,M15', 'w-[96px]'], ['CADCHF,M15', 'w-[96px]'], ['EURCHF,M15', 'w-[92px]'], ['EURJPY,M30', 'w-[88px]'],
  ['AUDJPY,M30', 'w-[92px]'], ['NZDUSD,H1', 'w-[88px]'], ['EURGBP,M15', 'w-[92px]'], ['BRN,M30', 'w-[72px]'],
  ['EURGBP,M15', 'w-[92px]'], ['USDCHF,H1', 'w-[84px]'], ['US500,M30', 'w-[80px]'], ['EURUSD,M30', 'w-[92px]'],
  ['COPPER,M30', 'w-[92px]'],
];

const Tabs = () => (
  <div className="flex h-[23px] overflow-hidden border-t border-b border-t-white border-b-white bg-[#f0f0f0] text-[11px]">
    <div className="flex min-w-0 flex-1 items-start border-t border-black">
      {TABS.map(([name, w], i) =>
        name === 'BRN,M30' ? (
          <button key={i} type="button" className={`-mt-px h-[20px] shrink-0 border-r border-b border-l border-black bg-white ${w}`}>
            {name}
          </button>
        ) : (
          <button key={i} type="button" className={`flex h-[18px] shrink-0 items-center text-[#6d6d6d] ${w}`}>
            <span className="flex-1 text-center">{name}</span>
            {TABS[i + 1]?.[0] !== 'BRN,M30' && <i className="h-[14px] w-px bg-[#6d6d6d]" />}
          </button>
        ),
      )}
      <div className="mt-[5px] mr-[9px] ml-auto flex gap-[16px]">
        <svg width="4" height="8" viewBox="0 0 4 8"><path d="M4 0v8L0 4z" fill="#000" /></svg>
        <svg width="4" height="8" viewBox="0 0 4 8"><path d="M0 0v8l4-4z" fill="#a0a0a0" /></svg>
      </div>
    </div>
  </div>
);

const StatusBar = () => (
  <footer className="flex h-[22px] items-center bg-[#f0f0f0] text-[11px] leading-[18px]">
    <span className="flex-1 pl-[2px]">Для вызова справки нажмите F1</span>
    <span className="h-[18px] w-[115px] border-l border-[#a0a0a0] pl-[5px]">Default</span>
    <span className="h-[18px] w-[103px] border-l border-[#a0a0a0]" />
    <span className="h-[18px] w-[71px] border-l border-[#a0a0a0]" />
    <span className="h-[18px] w-[71px] border-l border-[#a0a0a0]" />
    <span className="h-[18px] w-[67px] border-l border-[#a0a0a0]" />
    <span className="h-[18px] w-[71px] border-l border-[#a0a0a0]" />
    <span className="h-[18px] w-[65px] border-l border-[#a0a0a0]" />
    <span className="flex h-[18px] w-[130px] items-center gap-[4px] border-l border-[#a0a0a0] pl-[5px]">
      <svg width="24" height="13" viewBox="0 0 24 13" shapeRendering="crispEdges">
        {Array.from({ length: 8 }, (_, i) => (
          <g key={i}>
            <path d={`M${i * 3 + 1} 0v${9 - i}`} stroke="#6b7d0a" strokeWidth="2" />
            <path d={`M${i * 3 + 1} ${10 - i}V13`} stroke="#123f5c" strokeWidth="2" />
          </g>
        ))}
      </svg>
      317136/418 kb
    </span>
  </footer>
);

export default function App() {
  return (
    <div className="flex h-screen flex-col overflow-hidden bg-[#f0f0f0] font-['Open_Sans',sans-serif] text-black">
      <TitleBar />
      <MenuBar />
      <Toolbar />
      <ChartWindow />
      <Tabs />
      <StatusBar />
    </div>
  );
}
